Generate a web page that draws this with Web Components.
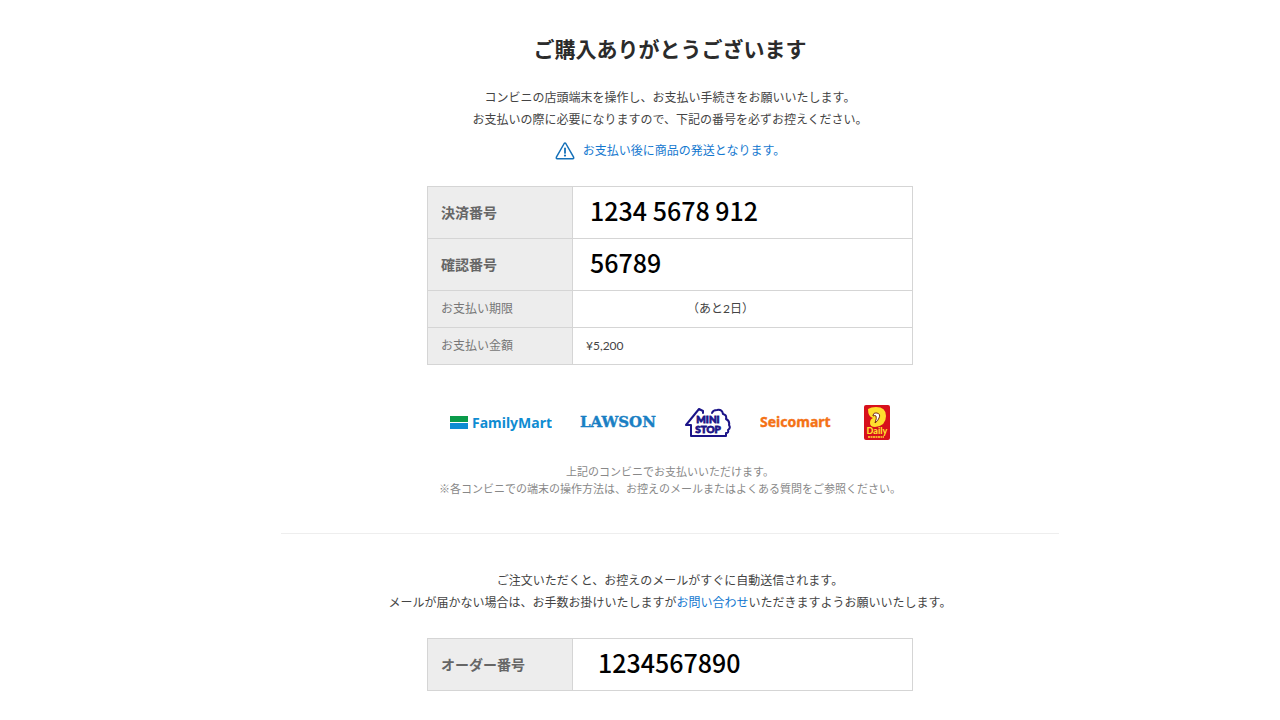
<!DOCTYPE html>
<html lang="ja">
<head>
  <meta charset="UTF-8">
  <meta name="viewport" content="width=device-width, initial-scale=1">
  <title>ご購入ありがとうございます</title>
  <style>
    body {
      margin: 0;
      background-color: #fff;
      color: #444;
      font-family: Lato, "Noto Sans CJK JP", sans-serif;
      font-size: 12px;
      line-height: 22px;
    }
  </style>
</head>
<body>
  <thanks-page>
    <span slot="title">ご購入ありがとうございます</span>
    <page-lead>
      コンビニの店頭端末を操作し、お支払い手続きをお願いいたします。<br>
      お支払いの際に必要になりますので、下記の番号を必ずお控えください。
    </page-lead>
    <shipping-notice>お支払い後に商品の発送となります。</shipping-notice>
    <info-table id="payment"></info-table>
    <store-logos></store-logos>
    <page-note>
      上記のコンビニでお支払いいただけます。<br>
      ※各コンビニでの端末の操作方法は、お控えのメールまたはよくある質問をご参照ください。
    </page-note>
    <page-lead slot="order">
      ご注文いただくと、お控えのメールがすぐに自動送信されます。<br>
      メールが届かない場合は、お手数お掛けいたしますが<text-link to="#contact">お問い合わせ</text-link>いただきますようお願いいたします。
    </page-lead>
    <info-table id="order" slot="order"></info-table>
  </thanks-page>

  <script>
    class ThanksPage extends HTMLElement {
      constructor() {
        super();
        this.shadowDOM = this.attachShadow({mode: 'open'});
        this.shadowDOM.innerHTML = `
          <style>
            :host {
              display: block;
              padding: 33px 0 28px 60px;
            }
            main {
              max-width: 778px;
              margin: 0 auto;
            }
            h1 {
              margin: 0 0 22px;
              color: #2b2b2b;
              font-size: 21px;
              line-height: 32px;
              text-align: center;
            }
            section {
              display: flex;
              flex-direction: column;
              align-items: center;
            }
            .order {
              margin-top: 36px;
              padding-top: 36px;
              border-top: 1px solid #eee;
            }
          </style>

          <main>
            <h1><slot name="title"></slot></h1>
            <section><slot></slot></section>
            <section class="order"><slot name="order"></slot></section>
          </main>
        `;
      }
    }

    class PageLead extends HTMLElement {
      constructor() {
        super();
        this.shadowDOM = this.attachShadow({mode: 'open'});
        this.shadowDOM.innerHTML = `
          <style>
            :host {
              display: block;
              text-align: center;
            }
            p {
              margin: 0;
            }
          </style>
          <p><slot></slot></p>
        `;
      }
    }

    class PageNote extends HTMLElement {
      constructor() {
        super();
        this.shadowDOM = this.attachShadow({mode: 'open'});
        this.shadowDOM.innerHTML = `
          <style>
            :host {
              display: block;
              margin-top: 23px;
              color: #888;
              font-size: 11px;
              line-height: 17px;
              text-align: center;
            }
            p {
              margin: 0;
            }
          </style>
          <p><slot></slot></p>
        `;
      }
    }

    class TextLink extends HTMLElement {
      constructor() {
        super();
        this.shadowDOM = this.attachShadow({mode: 'open'});
      }

      // no whitespace around the tags, the link sits inside a sentence
      connectedCallback() {
        this.shadowDOM.innerHTML = `<style>
            :host {
              display: inline;
            }
            a {
              color: #1478cf;
              text-decoration: none;
            }
            a:hover {
              text-decoration: underline;
            }
          </style><a href="${this.getAttribute('to')}"><slot></slot></a>`;
      }
    }

    class ShippingNotice extends HTMLElement {
      constructor() {
        super();
        this.shadowDOM = this.attachShadow({mode: 'open'});
        this.shadowDOM.innerHTML = `
          <style>
            :host {
              display: flex;
              align-items: center;
              gap: 8px;
              margin-top: 9px;
              color: #1478cf;
            }
            svg {
              width: 20px;
              height: 18px;
            }
          </style>
          <svg viewBox="0 0 20 18" fill="none" stroke="#1470b8" stroke-width="1.5" stroke-linejoin="round" stroke-linecap="round" aria-hidden="true">
            <path d="M9.2 1.5Q10 .4 10.8 1.5L18.6 15.2Q19 16.7 17.8 16.8H2.2Q1 16.7 1.4 15.2Z"/>
            <path d="M10 6.3v4.6" stroke-width="1.8"/>
            <circle cx="10" cy="13.6" r="1.1" fill="#1470b8" stroke="none"/>
          </svg>
          <slot></slot>
        `;
      }
    }

    class InfoTable extends HTMLElement {
      constructor() {
        super();
        this.shadowDOM = this.attachShadow({mode: 'open'});
      }

      /**
       * @param {Array<{label: string, value: string, type?: string}>} rows
       */
      set rows(rows) {
        this._rows = rows;
        this.render();
      }

      render() {
        this.shadowDOM.innerHTML = `
          <style>
            :host {
              display: block;
              width: 100%;
              max-width: 486px;
              margin-top: 24px;
            }
            table {
              width: 100%;
              border-collapse: collapse;
            }
            th, td {
              height: 36px;
              padding: 0 13px;
              border: 1px solid #d5d5d5;
              text-align: left;
            }
            th {
              width: 145px;
              box-sizing: border-box;
              background-color: #ededed;
              color: #777;
              font-weight: normal;
            }
            .code th, .order th {
              color: #666;
              font-size: 14px;
              font-weight: bold;
            }
            .code td, .order td {
              height: 45px;
              padding: 0 17px 6px;
              color: #000;
              font-family: "Noto Sans CJK JP", sans-serif;
              font-size: 25px;
              font-weight: 500;
            }
            .order td {
              padding: 0 25px 6px;
            }
            .date {
              display: inline-block;
              min-width: 101px;
            }
          </style>

          <table>
            <tbody>
              ${this._rows.map(row => `
                <tr class="${row.type || ''}">
                  <th scope="row">${row.label}</th>
                  <td>${row.value}</td>
                </tr>
              `).join('')}
            </tbody>
          </table>
        `;
      }
    }

    class StoreLogos extends HTMLElement {
      constructor() {
        super();
        this.shadowDOM = this.attachShadow({mode: 'open'});
        this.shadowDOM.innerHTML = `
          <style>
            :host {
              display: flex;
              flex-wrap: wrap;
              align-items: center;
              justify-content: center;
              gap: 28px;
              margin-top: 39px;
            }
            svg {
              display: block;
            }
          </style>

          <svg width="102" height="24" viewBox="0 0 102 24" role="img" aria-label="FamilyMart">
            <path fill="#0a9b4a" d="M0 6h18v6H0z"/>
            <path fill="#0f8cd2" d="M0 13h18v6H0z"/>
            <text x="22" y="18" fill="#0f8cd2" font-family="Noto Sans" font-size="14" font-weight="700">FamilyMart</text>
          </svg>

          <svg width="77" height="24" viewBox="0 0 77 24" role="img" aria-label="LAWSON">
            <text x="0" y="17" fill="#1a7fc4" stroke="#1a7fc4" stroke-width="0.4" font-family="DejaVu Serif" font-size="15" font-weight="700">LAWSON</text>
          </svg>

          <svg width="47" height="34" viewBox="0 0 47 34" role="img" aria-label="MINI STOP">
            <g fill="none" stroke="#1b1488" stroke-width="2" stroke-linejoin="round" stroke-linecap="round">
              <path d="M18 8V6L14 4 1 20h5v11h35v-3q3 0 2-3 3-2 1-5 1-4-3-6 1-4-3-5-1-5-6-4-4 0-5 3"/>
            </g>
            <text x="23" y="18" fill="#1b1488" stroke="#1b1488" stroke-width="0.8" font-family="Lato" font-size="10" font-weight="900" text-anchor="middle">MINI</text>
            <text x="23" y="28" fill="#1b1488" stroke="#1b1488" stroke-width="0.8" font-family="Lato" font-size="10" font-weight="900" text-anchor="middle">STOP</text>
          </svg>

          <svg width="76" height="24" viewBox="0 0 76 24" role="img" aria-label="Seicomart">
            <text x="0" y="17" fill="#f47216" stroke="#f47216" stroke-width="0.4" font-family="Noto Sans" font-size="14" font-weight="700">Seicomart</text>
            <path fill="#fff" d="M34 8l4-1-1 4z"/>
          </svg>

          <svg width="27" height="36" viewBox="0 0 27 36" role="img" aria-label="Daily">
            <rect width="26" height="35" y="1" rx="2" fill="#d7101c"/>
            <path fill="#ffdf2e" d="M4 5q3-2 8-2 10 0 10 9 0 10-11 11-5 0-5-4 0-4 3-5-5-1-5-9z"/>
            <path fill="#fff" stroke="#7a2a12" stroke-width="1" d="M9 11q1-3 4-2 4 1 2 5-1 3-4 5 2-5 1-7-1-1-3 0z"/>
            <text x="13" y="30" fill="#ffdf2e" font-family="Lato" font-size="9" font-weight="900" text-anchor="middle">Daily</text>
            <path stroke="#ffdf2e" stroke-width="1.5" stroke-dasharray="2 .5" d="M4 33h16"/>
          </svg>
        `;
      }
    }

    customElements.define('thanks-page', ThanksPage);
    customElements.define('page-lead', PageLead);
    customElements.define('page-note', PageNote);
    customElements.define('text-link', TextLink);
    customElements.define('shipping-notice', ShippingNotice);
    customElements.define('info-table', InfoTable);
    customElements.define('store-logos', StoreLogos);

    document.querySelector('#payment').rows = [
      {label: '決済番号', value: '1234 5678 912', type: 'code'},
      {label: '確認番号', value: '56789', type: 'code'},
      {label: 'お支払い期限', value: '<span class="date"></span>（あと2日）'},
      {label: 'お支払い金額', value: '¥5,200'},
    ];

    document.querySelector('#order').rows = [
      {label: 'オーダー番号', value: '1234567890', type: 'order'},
    ];
  </script>
</body>
</html>
